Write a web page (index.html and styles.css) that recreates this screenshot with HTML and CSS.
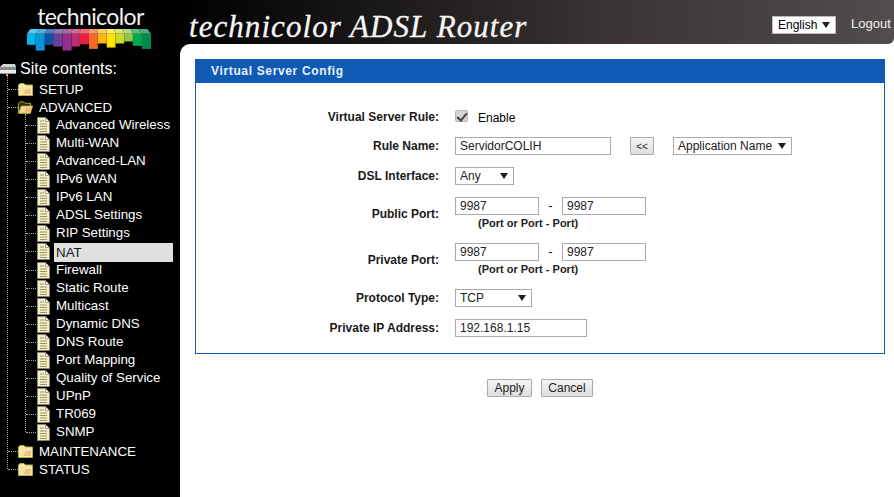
FILE: index.html
```html
<!DOCTYPE html>
<html lang="en">
<head>
<meta charset="utf-8">
<title>technicolor ADSL Router</title>
<link rel="stylesheet" href="styles.css">
</head>
<body>
<svg class="defs" width="0" height="0" aria-hidden="true">
  <symbol id="folder" viewBox="0 0 15 13">
    <path d="M.5 12.500V2L2 .5h4L7.500 2h7v10.500z" fill="#f7e9a8" stroke="#b5ad3a"/>
    <path d="M2 4h11v7H2z" fill="#f8e3a6"/>
    <path d="M8 6h5v5H5z" fill="#eec08e"/>
  </symbol>
  <symbol id="folder-open" viewBox="0 0 16 13">
    <path d="M.5 12.500V2L2 .5h4L7.500 2h6v10.500z" fill="#2a2a10" stroke="#b5ad3a"/>
    <path d="M.8 12.500 3.500 5h12l-2.500 7.500z" fill="#f3d98f" stroke="#c0b640"/>
    <path d="M9 7h4.500L12 11H7z" fill="#e8b67c"/>
  </symbol>
  <symbol id="doc" viewBox="0 0 13 17">
    <path d="M.5 .5h8l4 4v12H.5z" fill="#f5efc4" stroke="#8c8c80" stroke-width=".7"/>
    <path d="M8.500 .5v4h4z" fill="#fff" stroke="#777" stroke-width=".7"/>
    <path d="M3 4h4M3 7h7M3 9.500h7M3 12h7M3 14.500h7" stroke="#8f8a60" stroke-width=".9"/>
    <path d="M0 0v17" stroke="#9a9a9a"/>
  </symbol>
</svg>

<div class="app">
  <aside class="sidebar">
    <div class="logo">
      <div class="logo-word">technicolor</div>
      <svg class="rainbow" width="124" height="22" viewBox="82 88 370 65" aria-hidden="true">
        <path d="M82 102h26v33H82z" fill="#00b4f0"/>
        <path d="M108 102h27v50h-27z" fill="#0b93d8"/>
        <path d="M135 102h25v33h-25z" fill="#0a55a8"/>
        <path d="M160 102h28v38h-28z" fill="#6a3f9c"/>
        <path d="M188 102h27v50h-27z" fill="#94308c"/>
        <path d="M215 102h25v38h-25z" fill="#c02c6c"/>
        <path d="M240 102h27v31h-27z" fill="#ea1f3c"/>
        <path d="M267 102h26v45h-26z" fill="#f56a26"/>
        <path d="M293 102h27v29h-27z" fill="#fdb515"/>
        <path d="M320 102h26v41h-26z" fill="#fee600"/>
        <path d="M346 102h26v29h-26z" fill="#c8da2a"/>
        <path d="M372 102h26v23h-26z" fill="#92c645"/>
        <path d="M398 102h27v36h-27z" fill="#00a84e"/>
        <path d="M425 102h27v45h-27z" fill="#008a50"/>
        <path d="M92 88h27l-11 14H82z" fill="#5ec9ee"/>
        <path d="M119 88h22l-6 14h-27z" fill="#4fb0de"/>
        <path d="M141 88h24l-5 14h-25z" fill="#4f80bd"/>
        <path d="M165 88h27l-4 14h-28z" fill="#9277b5"/>
        <path d="M192 88h25l-2 14h-27z" fill="#b06ba9"/>
        <path d="M217 88h24l-1 14h-25z" fill="#d26a94"/>
        <path d="M241 88h26v14h-27z" fill="#ef6a78"/>
        <path d="M267 88h25l1 14h-26z" fill="#f79a66"/>
        <path d="M292 88h26l2 14h-27z" fill="#fdcd62"/>
        <path d="M318 88h24l4 14h-26z" fill="#fdef5e"/>
        <path d="M342 88h25l5 14h-26z" fill="#d9e574"/>
        <path d="M367 88h24l7 14h-26z" fill="#b6d984"/>
        <path d="M391 88h24l10 14h-27z" fill="#58c086"/>
        <path d="M415 88h26l11 14h-27z" fill="#4daa86"/>
      </svg>
    </div>
    <nav class="tree">
      <div class="tree-title">
        <svg class="server" width="16" height="14" viewBox="0 0 16 14" aria-hidden="true">
          <path d="M3 1h12l1 3H0z" fill="#d4d4d4"/>
          <path d="M0 4h16v3H0z" fill="#8a8a8a"/>
          <path d="M0 7h16v4H0z" fill="#ececec"/>
          <path d="M12 5h3v1h-3z" fill="#3bbf55"/>
          <path d="M0 10h16v1H0z" fill="#999"/>
          <path d="M6 11h2v2H6z" fill="#f0a020"/>
        </svg>
        <span>Site contents:</span>
      </div>
      <ul class="level1">
        <li class="node"><svg class="ic-folder"><use href="#folder"/></svg><a>SETUP</a></li>
        <li class="node"><svg class="ic-folder"><use href="#folder-open"/></svg><a>ADVANCED</a></li>
        <li>
          <ul class="level2">
            <li class="leaf"><svg class="ic-doc"><use href="#doc"/></svg><a>Advanced Wireless</a></li>
            <li class="leaf"><svg class="ic-doc"><use href="#doc"/></svg><a>Multi-WAN</a></li>
            <li class="leaf"><svg class="ic-doc"><use href="#doc"/></svg><a>Advanced-LAN</a></li>
            <li class="leaf"><svg class="ic-doc"><use href="#doc"/></svg><a>IPv6 WAN</a></li>
            <li class="leaf"><svg class="ic-doc"><use href="#doc"/></svg><a>IPv6 LAN</a></li>
            <li class="leaf"><svg class="ic-doc"><use href="#doc"/></svg><a>ADSL Settings</a></li>
            <li class="leaf"><svg class="ic-doc"><use href="#doc"/></svg><a>RIP Settings</a></li>
            <li class="leaf active"><svg class="ic-doc"><use href="#doc"/></svg><a>NAT</a></li>
            <li class="leaf"><svg class="ic-doc"><use href="#doc"/></svg><a>Firewall</a></li>
            <li class="leaf"><svg class="ic-doc"><use href="#doc"/></svg><a>Static Route</a></li>
            <li class="leaf"><svg class="ic-doc"><use href="#doc"/></svg><a>Multicast</a></li>
            <li class="leaf"><svg class="ic-doc"><use href="#doc"/></svg><a>Dynamic DNS</a></li>
            <li class="leaf"><svg class="ic-doc"><use href="#doc"/></svg><a>DNS Route</a></li>
            <li class="leaf"><svg class="ic-doc"><use href="#doc"/></svg><a>Port Mapping</a></li>
            <li class="leaf"><svg class="ic-doc"><use href="#doc"/></svg><a>Quality of Service</a></li>
            <li class="leaf"><svg class="ic-doc"><use href="#doc"/></svg><a>UPnP</a></li>
            <li class="leaf"><svg class="ic-doc"><use href="#doc"/></svg><a>TR069</a></li>
            <li class="leaf"><svg class="ic-doc"><use href="#doc"/></svg><a>SNMP</a></li>
          </ul>
        </li>
        <li class="node"><svg class="ic-folder"><use href="#folder"/></svg><a>MAINTENANCE</a></li>
        <li class="node"><svg class="ic-folder"><use href="#folder"/></svg><a>STATUS</a></li>
      </ul>
    </nav>
  </aside>

  <div class="right">
    <header class="topbar">
      <h1 class="brand">technicolor ADSL Router</h1>
      <div class="top-actions">
        <span class="select lang"><select><option>English</option></select></span>
        <a class="logout">Logout</a>
      </div>
    </header>
    <main class="content">
      <section class="panel">
        <h2 class="panel-title">Virtual Server Config</h2>
        <form class="panel-body">
          <div class="row row-rule">
            <label class="lbl">Virtual Server Rule:</label>
            <div class="fields"><input class="check" type="checkbox" checked><span class="enable">Enable</span></div>
          </div>
          <div class="row row-name">
            <label class="lbl">Rule Name:</label>
            <div class="fields">
              <input class="txt w-name" type="text" value="ServidorCOLIH">
              <button class="btn btn-arrow" type="button">&lt;&lt;</button>
              <span class="select w-app"><select><option>Application Name</option></select></span>
            </div>
          </div>
          <div class="row row-dsl">
            <label class="lbl">DSL Interface:</label>
            <div class="fields"><span class="select w-any"><select><option>Any</option></select></span></div>
          </div>
          <div class="row row-port">
            <label class="lbl">Public Port:</label>
            <div class="fields-stack">
              <div class="fields">
                <input class="txt w-port" type="text" value="9987"><span class="dash">-</span><input class="txt w-port" type="text" value="9987">
              </div>
              <div class="hint">(Port or Port - Port)</div>
            </div>
          </div>
          <div class="row row-port">
            <label class="lbl">Private Port:</label>
            <div class="fields-stack">
              <div class="fields">
                <input class="txt w-port" type="text" value="9987"><span class="dash">-</span><input class="txt w-port" type="text" value="9987">
              </div>
              <div class="hint">(Port or Port - Port)</div>
            </div>
          </div>
          <div class="row row-proto">
            <label class="lbl">Protocol Type:</label>
            <div class="fields"><span class="select w-tcp"><select><option>TCP</option></select></span></div>
          </div>
          <div class="row row-ip">
            <label class="lbl">Private IP Address:</label>
            <div class="fields"><input class="txt w-ip" type="text" value="192.168.1.15"></div>
          </div>
        </form>
      </section>
      <div class="actions">
        <button class="btn btn-apply" type="button">Apply</button>
        <button class="btn btn-cancel" type="button">Cancel</button>
      </div>
    </main>
  </div>
</div>
</body>
</html>
```
FILE: styles.css
```css
* { box-sizing: border-box; }
html, body { margin: 0; height: 100%; }
body { background: #fff; font-family: "Liberation Sans", Arial, sans-serif; font-size: 12px; color: #000; overflow: hidden; }
.defs { display: block; height: 0; }
ul { list-style: none; margin: 0; padding: 0; }

.app { display: grid; grid-template-columns: 180px 1fr; height: 497px; background: #000; }

/* sidebar */
.sidebar { background: #000; color: #fff; }
.logo { display: flex; flex-direction: column; align-items: center; height: 60px; padding: 4px 0 0 0; margin-left: 1px; }
.logo-word { font-family: Lato, "Liberation Sans", sans-serif; font-weight: 400; font-size: 23px; line-height: 24px; letter-spacing: -.6px; color: #f0f0f0; }
.rainbow { margin-top: 1px; margin-left: -3px; }

.tree { position: relative; }
.tree-title { display: flex; align-items: center; height: 20px; font-size: 16px; gap: 4px; position: relative; top: -1px; }
.server { flex: none; margin-top: 2px; }

.level1 { position: relative; }
.level1::before { content: ""; position: absolute; left: 7px; top: -4px; bottom: 9px; border-left: 1px dotted #aaa; }
.level1 > li { position: relative; }
.node { display: flex; align-items: center; height: 18px; font-size: 13.33px; padding-left: 18px; }
.node::before, .leaf::before { content: ""; position: absolute; top: 9px; border-top: 1px dotted #aaa; }
.node::before { left: 8px; width: 10px; }
.ic-folder { width: 15px; height: 13px; flex: none; margin-right: 6px; }
.level2 { position: relative; margin-bottom: 1px; }
.level2::before { content: ""; position: absolute; left: 25px; top: -2px; bottom: 9px; border-left: 1px dotted #aaa; }
.leaf { position: relative; display: flex; align-items: center; height: 18px; font-size: 13.33px; padding-left: 37px; }
.leaf > a { margin-top: -1px; }
.leaf::before { left: 26px; width: 10px; }
.ic-doc { width: 13px; height: 17px; flex: none; margin-right: 6px; }
.active { height: 19px; }
.leaf.active > a { background: #e0e0e0; color: #1a1a1a; width: 119px; height: 19px; line-height: 19px; display: block; position: relative; top: 1px; padding-left: 2px; margin: 0 0 0 -2px; }

/* top bar */
.right { display: flex; flex-direction: column; min-width: 0; background: linear-gradient(90deg, #000 50%, #fff 50%); }
.topbar { height: 44px; display: flex; justify-content: space-between; align-items: flex-start; background: linear-gradient(90deg, #000 0, #3a3434 60%, #524d4d 100%); border-bottom-right-radius: 6px; }
.brand { margin: 10px 0 0 9px; font: italic 400 31px/34px "Liberation Serif", "Times New Roman", serif; letter-spacing: 1.06px; color: #f6f6f6; white-space: nowrap; -webkit-text-stroke: .3px #f6f6f6; }
.top-actions { display: flex; align-items: center; gap: 15px; padding: 16px 4px 0 0; }
.logout { color: #f0f0f0; font-size: 13px; width: 39px; position: relative; top: -2px; }

.content { flex: 1; background: #fff; border-top-left-radius: 10px; padding: 15px 9px 0 15px; }

/* panel */
.panel { border: 1px solid #105ab4; border-top: 0; }
.panel-title { margin: 0 -1px; background: #105ab4; color: #e8f0fa; font-size: 12px; font-weight: 700; height: 24px; line-height: 24px; padding-left: 16px; letter-spacing: .65px; }
.panel-body { height: 270px; padding-top: 24px; }
.row { display: flex; align-items: flex-start; }
.lbl { width: 243px; text-align: right; font-weight: 700; font-size: 12px; color: #1a1a1a; flex: none; margin-right: 16px; }
.fields { display: flex; align-items: center; }
.fields-stack { display: flex; flex-direction: column; }

.row-rule { height: 30px; }
.row-rule .lbl { line-height: 20px; }
.row-name { height: 30px; }
.row-name .lbl { line-height: 18px; }
.row-dsl { height: 30px; }
.row-dsl .lbl { line-height: 18px; }
.row-port { height: 46px; }
.row-port .lbl { line-height: 18px; padding-top: 8px; }
.row-proto { height: 30px; }
.row-proto .lbl { line-height: 18px; }
.row-ip { height: 18px; }
.row-ip .lbl { line-height: 18px; }

.check { appearance: none; margin: 3px 0 0; width: 13px; height: 12px; border: 1px solid #b5b5b5; border-radius: 2px; background: #d6d6d6; position: relative; }
.check::after { content: ""; position: absolute; left: 3px; top: 0; width: 4px; height: 8px; border: solid #444; border-width: 0 2px 2px 0; transform: rotate(40deg); }
.enable { margin-left: 10px; font-size: 12px; position: relative; top: 3px; }

.txt { height: 18px; border: 1px solid #aaa; padding: 0 4px; font: 12px "Liberation Sans", Arial, sans-serif; color: #222; background: #fff; outline: 0; }
.w-name { width: 156px; }
.w-port { width: 84px; }
.w-ip { width: 132px; }
.dash { width: 23px; text-align: center; font-size: 12px; }
.hint { font-size: 11px; font-weight: 700; color: #222; margin: 2px 0 0 23px; line-height: 13px; }

.select { display: inline-block; position: relative; height: 18px; }
.select select { appearance: none; display: block; width: 100%; height: 18px; border: 1px solid #aaa; background: #fff; padding: 0 0 0 4px; font: 12px "Liberation Sans", Arial, sans-serif; color: #222; border-radius: 0; outline: 0; }
.select::after { content: ""; position: absolute; right: 6px; top: 6px; border-style: solid; border-width: 6px 4px 0; border-color: #222 transparent transparent; }
.lang { width: 64px; }
.lang select { color: #000; border-color: #bbb; padding-left: 5px; }
.w-app { width: 119px; margin-left: 19px; }
.w-any { width: 59px; }
.w-tcp { width: 77px; }

.btn { height: 18px; padding: 0; border: 1px solid #aaa; border-radius: 1px; background: linear-gradient(#f4f4f4, #dedede); font: 12px "Liberation Sans", Arial, sans-serif; color: #222; }
.btn-arrow { width: 24px; margin-left: 19px; font-size: 10px; }
.btn-apply { width: 45px; }
.btn-cancel { width: 52px; }
.actions { display: flex; gap: 9px; padding: 25px 0 0 292px; }
```
